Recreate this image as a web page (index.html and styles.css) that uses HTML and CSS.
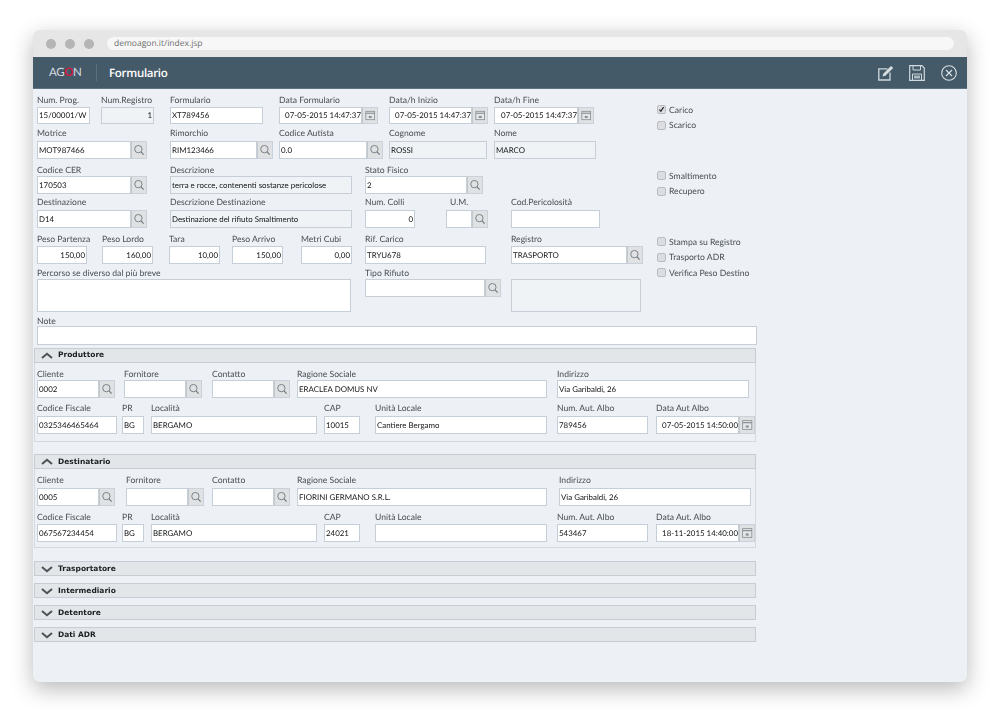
FILE: index.html
```html
<!DOCTYPE html>
<html lang="it">
<head>
<meta charset="utf-8">
<title>Formulario</title>
<link rel="stylesheet" href="styles.css">
</head>
<body>
<svg class="defs" aria-hidden="true">
  <symbol id="s" viewBox="0 0 16 18"><circle cx="7.300" cy="8" r="4.200" fill="none" stroke="#6f777d" stroke-width="1"/><path d="M10.300 11.200l3 3.200" stroke="#6f777d" stroke-width="1.300" fill="none"/></symbol>
  <symbol id="c" viewBox="0 0 16 18"><rect x="3" y="4" width="10.500" height="10" fill="#e4e6e8" stroke="#8a9195"/><path d="M3 6.300h10.500" stroke="#8a9195" stroke-width="1.400"/><path d="M6.500 9.500h3.500v2.500h-3.500z" fill="#8a9195"/></symbol>
</svg>
<div class="window">
  <div class="chrome">
    <div class="dots"><i class="dot"></i><i class="dot"></i><i class="dot"></i></div>
    <div class="url">demoagon.it/index.jsp</div>
  </div>
  <header class="bar">
    <div class="logo">AG<b>O</b>N</div>
    <h1>Formulario</h1>
    <div class="tools">
      <svg class="t1" viewBox="0 0 16 16"><path d="M9.500 3.800H.8v11.200h11.200V7.500" fill="none" stroke="#cfd9de" stroke-width="1.300"/><path d="M4.500 11.500l.8-2.800L13 1l2.200 2L7.300 10.800z" fill="#d8e0e4"/></svg>
      <svg class="t2" viewBox="0 0 16 16"><path d="M.7.700h12.200l2.400 2.400v12.200H.7z" fill="none" stroke="#cfd9de" stroke-width="1.200"/><path d="M4 .7v4.300h7.500V.7M3.500 15.300V9h9v6.300" fill="none" stroke="#cfd9de"/><path d="M5 10.500h6v3h-6z" fill="#aab8c0"/></svg>
      <svg class="t3" viewBox="0 0 16 16"><circle cx="8" cy="8" r="7.300" fill="none" stroke="#d8e0e4" stroke-width="1.100"/><path d="M5 5l6 6M11 5l-6 6" stroke="#d8e0e4" stroke-width="1.200"/></svg>
    </div>
  </header>
  <main class="content">
    <div class="top">
      <div class="form">
        <div class="row r1">
          <div class="field"><label>Num. Prog.</label><div class="inp w53">15/00001/W</div></div>
          <div class="field"><label>Num.Registro</label><div class="inp w53 ro num">1</div></div>
          <div class="field"><label>Formulario</label><div class="inp w93">XT789456</div></div>
          <div class="field"><label>Data Formulario</label><div class="ctl w99"><div class="inp date">07-05-2015 14:47:37</div><span class="btn"><svg><use href="#c"/></svg></span></div></div>
          <div class="field"><label>Data/h Inizio</label><div class="ctl w99"><div class="inp date">07-05-2015 14:47:37</div><span class="btn"><svg><use href="#c"/></svg></span></div></div>
          <div class="field"><label>Data/h Fine</label><div class="ctl w100"><div class="inp date">07-05-2015 14:47:37</div><span class="btn"><svg><use href="#c"/></svg></span></div></div>
        </div>
        <div class="row r2 g8">
          <div class="field"><label>Motrice</label><div class="ctl w110"><div class="inp">MOT987466</div><span class="btn"><svg><use href="#s"/></svg></span></div></div>
          <div class="field"><label>Rimorchio</label><div class="ctl w103"><div class="inp">RIM123466</div><span class="btn"><svg><use href="#s"/></svg></span></div></div>
          <div class="field"><label>Codice Autista</label><div class="ctl w104"><div class="inp">0.0</div><span class="btn"><svg><use href="#s"/></svg></span></div></div>
          <div class="field"><label>Cognome</label><div class="inp w98 ro">ROSSI</div></div>
          <div class="field"><label>Nome</label><div class="inp w102 ro">MARCO</div></div>
        </div>
        <div class="row r3 g6">
          <div class="field"><label>Codice CER</label><div class="ctl w110"><div class="inp">170503</div><span class="btn"><svg><use href="#s"/></svg></span></div></div>
          <div class="field"><label>Descrizione</label><div class="inp w182 ro">terra e rocce, contenenti sostanze pericolose</div></div>
          <div class="field"><label>Stato Fisico</label><div class="ctl w118"><div class="inp">2</div><span class="btn"><svg><use href="#s"/></svg></span></div></div>
        </div>
        <div class="row r4 g8">
          <div class="field"><label>Destinazione</label><div class="ctl w110"><div class="inp">D14</div><span class="btn"><svg><use href="#s"/></svg></span></div></div>
          <div class="field"><label>Descrizione Destinazione</label><div class="inp w182 ro">Destinazione del rifiuto Smaltimento</div></div>
          <div class="field"><label>Num. Colli</label><div class="inp w50 num">0</div></div>
          <div class="field"><label class="um">U.M.</label><div class="ctl w42"><div class="inp"></div><span class="btn"><svg><use href="#s"/></svg></span></div></div>
          <div class="field"><label>Cod.Pericolosità</label><div class="inp w89"></div></div>
        </div>
        <div class="row r5">
          <div class="field"><label>Peso Partenza</label><div class="inp w50 num">150,00</div></div>
          <div class="field"><label>Peso Lordo</label><div class="inp w51 num">160,00</div></div>
          <div class="field"><label>Tara</label><div class="inp w51 num">10,00</div></div>
          <div class="field"><label>Peso Arrivo</label><div class="inp w51 num">150,00</div></div>
          <div class="field"><label>Metri Cubi</label><div class="inp w51 num">0,00</div></div>
          <div class="field"><label>Rif. Carico</label><div class="inp w121">TRYU678</div></div>
          <div class="field"><label>Registro</label><div class="ctl w132"><div class="inp">TRASPORTO</div><span class="btn"><svg><use href="#s"/></svg></span></div></div>
        </div>
        <div class="row r6 g6">
          <div class="field"><label>Percorso se diverso dal più breve</label><div class="inp w314 tall"></div></div>
          <div class="field"><label>Tipo Rifiuto</label><div class="ctl w136"><div class="inp"></div><span class="btn"><svg><use href="#s"/></svg></span></div></div>
          <div class="field"><label>&nbsp;</label><div class="inp w130 tall ro"></div></div>
        </div>
      </div>
      <aside class="side">
        <div class="checks">
          <div class="check"><span class="box"><svg viewBox="0 0 10 10"><path d="M2 5l2 2.500L8 1.500" fill="none" stroke="#222" stroke-width="1.700"/></svg></span>Carico</div>
          <div class="check"><span class="box"></span>Scarico</div>
        </div>
        <div class="checks">
          <div class="check"><span class="box"></span>Smaltimento</div>
          <div class="check"><span class="box"></span>Recupero</div>
        </div>
        <div class="checks last">
          <div class="check"><span class="box"></span>Stampa su Registro</div>
          <div class="check"><span class="box"></span>Trasporto ADR</div>
          <div class="check"><span class="box"></span>Verifica Peso Destino</div>
        </div>
      </aside>
    </div>
    <div class="note">
      <label>Note</label>
      <div class="inp w720 h19"></div>
    </div>

    <section class="sec first">
      <div class="head"><svg class="chev" viewBox="0 0 12 7"><path d="M1 6l5-4.300L11 6" fill="none" stroke="#4d5256" stroke-width="2"/></svg><span>Produttore</span></div>
      <div class="body pb7">
        <div class="row p1 g6">
          <div class="field"><label>Cliente</label><div class="ctl w78"><div class="inp">0002</div><span class="btn"><svg><use href="#s"/></svg></span></div></div>
          <div class="field"><label>Fornitore</label><div class="ctl w78"><div class="inp"></div><span class="btn"><svg><use href="#s"/></svg></span></div></div>
          <div class="field"><label>Contatto</label><div class="ctl w78"><div class="inp"></div><span class="btn"><svg><use href="#s"/></svg></span></div></div>
          <div class="field"><label>Ragione Sociale</label><div class="inp w250">ERACLEA DOMUS NV</div></div>
          <div class="field"><label>Indirizzo</label><div class="inp w192">Via Garibaldi, 26</div></div>
        </div>
        <div class="row p2 g8">
          <div class="field"><label>Codice Fiscale</label><div class="inp w80">0325346465464</div></div>
          <div class="field"><label>PR</label><div class="inp w22">BG</div></div>
          <div class="field"><label>Località</label><div class="inp w166">BERGAMO</div></div>
          <div class="field"><label>CAP</label><div class="inp w36">10015</div></div>
          <div class="field"><label>Unità Locale</label><div class="inp w172">Cantiere Bergamo</div></div>
          <div class="field"><label>Num. Aut. Albo</label><div class="inp w91">789456</div></div>
          <div class="field"><label>Data Aut Albo</label><div class="ctl w99"><div class="inp date">07-05-2015 14:50:00</div><span class="btn"><svg><use href="#c"/></svg></span></div></div>
        </div>
      </div>
    </section>

    <section class="sec second">
      <div class="head"><svg class="chev" viewBox="0 0 12 7"><path d="M1 6l5-4.300L11 6" fill="none" stroke="#4d5256" stroke-width="2"/></svg><span>Destinatario</span></div>
      <div class="body pb5">
        <div class="row d1 g8">
          <div class="field"><label>Cliente</label><div class="ctl w78"><div class="inp">0005</div><span class="btn"><svg><use href="#s"/></svg></span></div></div>
          <div class="field"><label>Fornitore</label><div class="ctl w78"><div class="inp"></div><span class="btn"><svg><use href="#s"/></svg></span></div></div>
          <div class="field"><label>Contatto</label><div class="ctl w78"><div class="inp"></div><span class="btn"><svg><use href="#s"/></svg></span></div></div>
          <div class="field"><label>Ragione Sociale</label><div class="inp w250">FIORINI GERMANO S.R.L.</div></div>
          <div class="field"><label>Indirizzo</label><div class="inp w192">Via Garibaldi, 26</div></div>
        </div>
        <div class="row p2">
          <div class="field"><label>Codice Fiscale</label><div class="inp w80">067567234454</div></div>
          <div class="field"><label>PR</label><div class="inp w22">BG</div></div>
          <div class="field"><label>Località</label><div class="inp w166">BERGAMO</div></div>
          <div class="field"><label>CAP</label><div class="inp w36">24021</div></div>
          <div class="field"><label>Unità Locale</label><div class="inp w172"></div></div>
          <div class="field"><label>Num. Aut. Albo</label><div class="inp w91">543467</div></div>
          <div class="field"><label>Data Aut. Albo</label><div class="ctl w99"><div class="inp date">18-11-2015 14:40:00</div><span class="btn"><svg><use href="#c"/></svg></span></div></div>
        </div>
      </div>
    </section>

    <section class="sec closed third">
      <div class="head"><svg class="chev" viewBox="0 0 12 7"><path d="M1 1l5 4.300L11 1" fill="none" stroke="#4d5256" stroke-width="2"/></svg><span>Trasportatore</span></div>
    </section>
    <section class="sec closed">
      <div class="head"><svg class="chev" viewBox="0 0 12 7"><path d="M1 1l5 4.300L11 1" fill="none" stroke="#4d5256" stroke-width="2"/></svg><span>Intermediario</span></div>
    </section>
    <section class="sec closed">
      <div class="head"><svg class="chev" viewBox="0 0 12 7"><path d="M1 1l5 4.300L11 1" fill="none" stroke="#4d5256" stroke-width="2"/></svg><span>Detentore</span></div>
    </section>
    <section class="sec closed">
      <div class="head"><svg class="chev" viewBox="0 0 12 7"><path d="M1 1l5 4.300L11 1" fill="none" stroke="#4d5256" stroke-width="2"/></svg><span>Dati ADR</span></div>
    </section>
  </main>
</div>
</body>
</html>
```
FILE: styles.css
```css
* { box-sizing: border-box; }
html, body { margin: 0; height: 100%; background: #fff; }
body { padding: 30px 33px 0; font-family: Lato, "Open Sans", sans-serif; font-size: 8px; color: #2b2f33; overflow: hidden; text-rendering: geometricPrecision; }
.defs { display: none; }

.window { width: 934px; height: 652px; background: #edf0f5; border-radius: 7px; box-shadow: 0 7px 22px rgba(0,0,0,.28); overflow: hidden; display: flex; flex-direction: column; filter: blur(.25px); }
.chrome { height: 27px; background: #e6e6e6; display: flex; align-items: center; padding-left: 13px; flex: none; }
.dots { display: flex; gap: 9px; width: 61px; }
.dot { width: 10px; height: 10px; border-radius: 50%; background: #b5b5b5; }
.url { width: 847px; height: 13px; line-height: 13px; border-radius: 7px; background: #f7f7f7; color: #6f6f6f; padding-left: 7px; font-size: 8.500px; font-family: "Open Sans", sans-serif; }

.bar { height: 32px; background: #455a68; border-bottom: 1px solid #5e7483; display: flex; align-items: center; flex: none; color: #fff; }
.logo { margin-left: 16px; width: 48px; font-family: Lato, sans-serif; font-size: 11.500px; font-weight: 400; letter-spacing: -.4px; color: #d5dde2; border-right: 1px solid #5a707e; line-height: 17px; }
.logo b { color: #d01c41; font-weight: 700; }
h1 { margin: 1px 0 0 12px; font-family: "Open Sans", sans-serif; font-size: 11.500px; font-weight: 600; flex: 1; letter-spacing: -.3px; }
.tools { display: flex; align-items: center; gap: 15px; padding-right: 10px; }
.tools svg { display: block; width: 16px; height: 16px; }
.tools .t3 { width: 16px; height: 16px; margin-left: 1px; }

.content { flex: 1; padding-left: 4px; }
.top { display: flex; }
.form { width: 620px; flex: none; }
.row { display: grid; align-items: end; }
.field { display: flex; flex-direction: column; align-items: flex-start; min-width: 0; }
label { display: block; height: 14px; line-height: 14px; color: #484f55; font-size: 8.600px; white-space: nowrap; }
label.um { padding-left: 4px; }
.g6 label { margin-bottom: -1px; }
.g8 label { margin-bottom: 1px; }

.r1 { height: 35px; grid-template-columns: 64px 69px 109px 110px 105px 1fr; }
.r2 { height: 35px; grid-template-columns: 133px 109px 110px 105px 1fr; }
.r3 { height: 35px; grid-template-columns: 133px 195px 1fr; }
.r4 { height: 34px; grid-template-columns: 133px 195px 81px 65px 1fr; }
.r5 { height: 36px; grid-template-columns: 65px 67px 63px 69px 64px 146px 1fr; }
.r6 { height: 48px; grid-template-columns: 328px 146px 1fr; align-items: start; padding-top: 2px; }
.p1 { height: 35px; grid-template-columns: 87px 88px 85px 260px 1fr; }
.p2 { height: 36px; grid-template-columns: 85px 29px 173px 51px 182px 99px 1fr; }
.d1 { height: 37px; grid-template-columns: 89px 86px 85px 262px 1fr; }

.inp { height: 18px; line-height: 16px; background: #fff; border: 1.500px solid #c6cfd7; padding: 0 1px; white-space: nowrap; overflow: hidden; color: #111416; flex: 1; min-width: 0; font-size: 7.900px; }
.r1 .inp { height: 17px; line-height: 15px; }
.ro { background: #f0f3f6; }
.num { text-align: right; }
.date { text-align: right; padding-right: 0; }
.tall { height: 33px; }
.h19 { height: 19px; }
.ctl { display: flex; height: 18px; }
.r1 .ctl { height: 17px; }
.btn { width: 16px; flex: none; background: #dfe1e3; border: 1px solid #c9d2da; border-left: 1px solid #c3c8cc; }
.btn svg { display: block; width: 14px; height: 100%; }

.w22 { width: 22px; flex: none; } .w36 { width: 36px; flex: none; } .w42 { width: 42px; } .w50 { width: 50px; flex: none; } .w51 { width: 51px; flex: none; } .w53 { width: 53px; flex: none; }
.w78 { width: 78px; } .w80 { width: 80px; flex: none; } .w89 { width: 89px; flex: none; } .w91 { width: 91px; flex: none; } .w93 { width: 93px; flex: none; } .w98 { width: 98px; flex: none; }
.w99 { width: 99px; } .w100 { width: 100px; } .w102 { width: 102px; flex: none; } .w103 { width: 103px; } .w104 { width: 104px; } .w110 { width: 110px; }
.w118 { width: 118px; } .w121 { width: 121px; flex: none; } .w130 { width: 130px; flex: none; } .w132 { width: 132px; } .w136 { width: 136px; }
.w166 { width: 166px; flex: none; } .w172 { width: 172px; flex: none; } .w182 { width: 182px; flex: none; } .w192 { width: 192px; flex: none; } .w250 { width: 250px; flex: none; }
.w314 { width: 314px; flex: none; } .w720 { width: 720px; flex: none; }

.side { padding-top: 13px; }
.checks { margin-bottom: 35px; }
.checks.last { margin-top: 1px; margin-bottom: 0; }
.check { display: flex; align-items: center; height: 15.500px; color: #484f55; font-size: 8.600px; }
.box { width: 9px; height: 9px; margin-right: 3px; border: 1px solid #b9bcc0; border-radius: 2px; background: #dcdde0; display: block; }
.box svg { display: block; width: 100%; height: 100%; }

.note { height: 33px; display: flex; flex-direction: column; justify-content: flex-end; }
.note label { margin-bottom: -2px; }

.sec { margin-left: -3px; width: 722px; }
.first { margin-top: 3px; }
.second { margin-top: 12px; }
.third { margin-top: 13px; }
.closed { margin-bottom: 7px; }
.head { height: 15px; display: flex; align-items: center; background: #e3e6e9; border: 1.500px solid #c6cdd4; border-width: 1.500px 1px; }
.head span { font-family: "DejaVu Sans", sans-serif; font-weight: 700; font-size: 7.500px; color: #1c1f22; margin-top: -1px; }
.first .head span { margin-top: -2px; }
.chev { width: 12px; height: 7px; margin: 0 5px 0 6px; flex: none; }
.closed .chev { margin-top: 2px; }
.body { border: 1px solid #d3d9df; border-top: 0; padding-left: 2px; }
.pb7 { padding-bottom: 7px; }
.pb5 { padding-bottom: 5px; }
```
